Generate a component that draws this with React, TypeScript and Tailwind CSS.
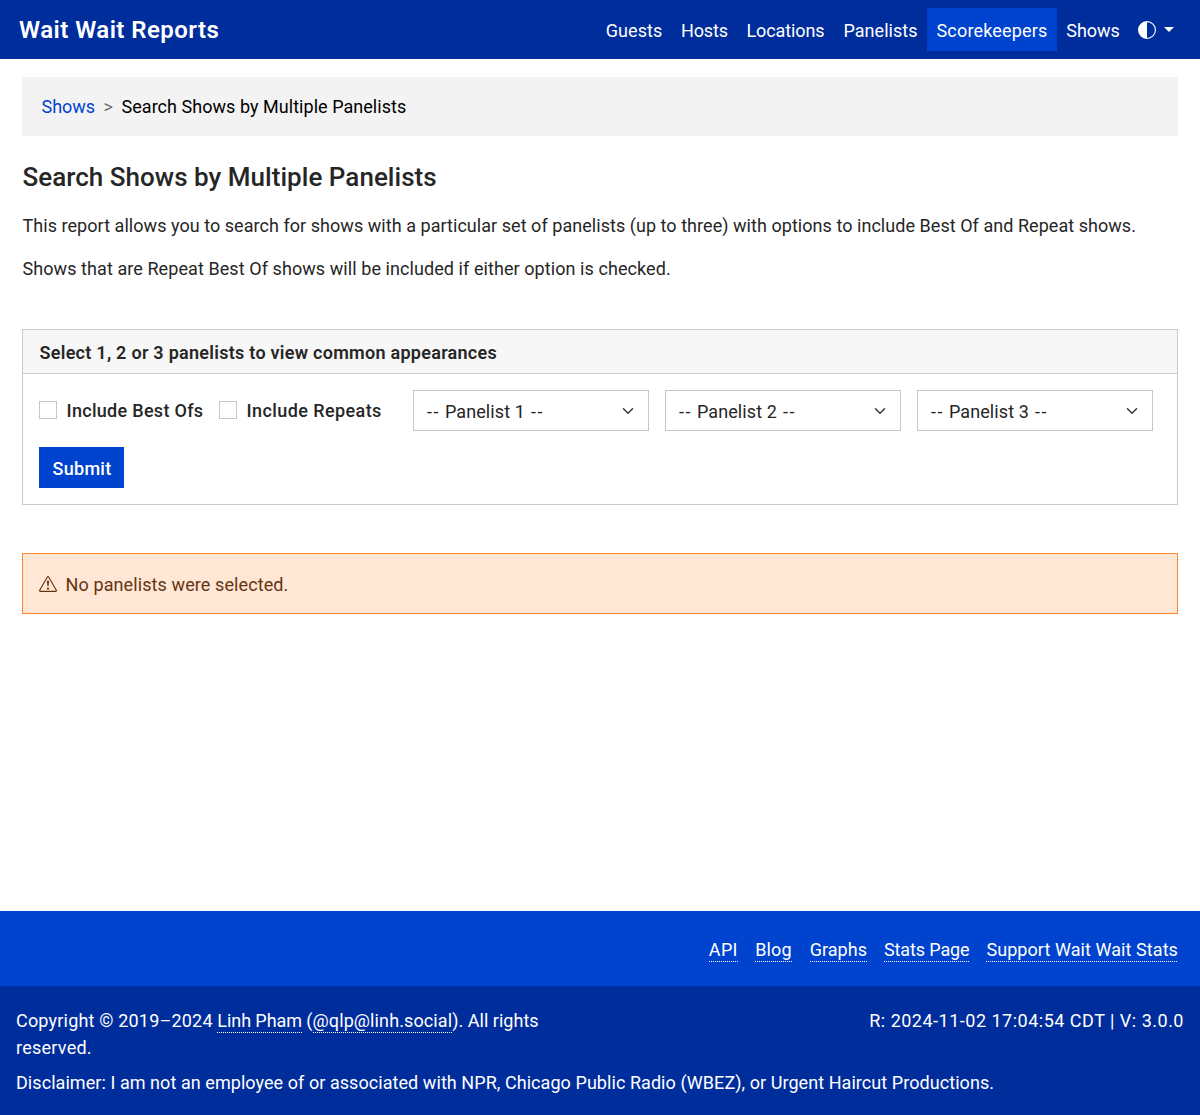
import { BsCircleHalf, BsExclamationTriangle } from 'react-icons/bs';

const navLinks = [
  { label: 'Guests', box: 'w-[76px]', text: 'tracking-[0.05px]' },
  { label: 'Hosts', box: 'w-[65px]', text: 'tracking-[-0.1px]' },
  { label: 'Locations', box: 'w-[97px]', text: 'tracking-[-0.1px]' },
  { label: 'Panelists', box: 'w-[93px]', text: 'tracking-[0.03px]' },
  { label: 'Scorekeepers', box: 'w-[130px] bg-[#0043ce]', text: 'tracking-[0.17px]' },
  { label: 'Shows', box: 'w-[72px]', text: 'tracking-[-0.04px]' },
];

const footerLinks = [
  { label: 'API', style: 'w-[29px] tracking-[0.34px]' },
  { label: 'Blog', style: 'w-[37px] tracking-[0.13px]' },
  { label: 'Graphs', style: 'w-[57px] tracking-[0.06px]' },
  { label: 'Stats Page', style: 'w-[85px] tracking-[-0.12px]' },
  { label: 'Support Wait Wait Stats', style: 'w-[191px] tracking-[0.07px]' },
];

function NavBar() {
  return (
    <nav className="flex h-[59px] items-start justify-between bg-[#002d9c] pt-2 pr-[26px] pl-[19px] text-white">
      <a href="#" className="text-[24px] leading-[45px] font-semibold tracking-[0.46px]">
        Wait Wait Reports
      </a>
      <div className="flex h-[43px]">
        {navLinks.map((link) => (
          <a key={link.label} href="#" className={`flex justify-center leading-[45px] whitespace-nowrap ${link.box}`}>
            <span className={link.text}>{link.label}</span>
          </a>
        ))}
        <button type="button" aria-label="Toggle theme" className="ml-[9px] flex items-center gap-2">
          <BsCircleHalf className="size-[18px]" />
          <span className="mb-px size-0 border-x-[5px] border-t-[5px] border-x-transparent border-t-white" />
        </button>
      </div>
    </nav>
  );
}

function Breadcrumb() {
  return (
    <ol className="mt-[18px] flex h-[59px] bg-[#f3f3f3] pl-[19.5px] leading-[60px]">
      <li className="tracking-[-0.04px] text-[#0043ce]">
        <a href="#">Shows</a>
      </li>
      <li className="w-[26.5px] text-center text-[#6f6f6f]">&gt;</li>
      <li className="tracking-[0.04px] text-black">Search Shows by Multiple Panelists</li>
    </ol>
  );
}

function Checkbox({ label, text }: { label: string; text: string }) {
  return (
    <label className="flex h-[41px] items-center">
      <span className="mb-[2px] size-[18px] shrink-0 border border-[#c6c6c6] bg-white" />
      <span className={`ml-[9.5px] font-medium whitespace-nowrap ${text}`}>{label}</span>
    </label>
  );
}

function PanelistSelect({ number }: { number: number }) {
  return (
    <button
      type="button"
      className="flex h-[41px] w-[236px] items-center justify-between border border-[#c6c6c6] bg-white pr-[14px] pl-[13px] text-left"
    >
      <span className="pt-[2px] tracking-[0.1px]">
        <span className="tracking-[1.5px]">-- </span>
        <span className="-ml-px">Panelist {number}</span>
        <span className="tracking-[1.5px]"> --</span>
      </span>
      <svg viewBox="0 0 16 16" className="size-3" fill="none" stroke="#393939" strokeWidth="2" strokeLinecap="round" strokeLinejoin="round">
        <path d="m2 5 6 6 6-6" />
      </svg>
    </button>
  );
}

function SearchCard() {
  return (
    <section className="mt-[47px] h-[176px] border border-[#cacaca]">
      <h2 className="h-[44px] border-b border-[#cacaca] bg-[#f7f7f7] pl-[16.5px] leading-[45px] font-semibold tracking-[0.27px]">
        Select 1, 2 or 3 panelists to view common appearances
      </h2>
      <form className="flex flex-wrap gap-4 p-4">
        <div className="flex w-[358px] gap-4">
          <div className="w-[164px]">
            <Checkbox label="Include Best Ofs" text="tracking-[0.3px]" />
          </div>
          <Checkbox label="Include Repeats" text="tracking-[0.41px]" />
        </div>
        <PanelistSelect number={1} />
        <PanelistSelect number={2} />
        <PanelistSelect number={3} />
        <button type="button" className="h-[41px] w-[85px] bg-[#0043ce] pt-[2px] pl-px font-medium tracking-[0.28px] text-white">
          Submit
        </button>
      </form>
    </section>
  );
}

function Footer() {
  return (
    <footer className="mt-auto text-white">
      <div className="flex h-[75px] justify-end gap-[17.4px] bg-[#0043ce] pt-[26px] pr-[22.6px]">
        {footerLinks.map((link) => (
          <a
            key={link.label}
            href="#"
            className={`h-[25px] border-b border-dotted border-white leading-[26px] whitespace-nowrap ${link.style}`}
          >
            {link.label}
          </a>
        ))}
      </div>
      <div className="h-[129px] bg-[#002d9c] px-4 pt-[21px] leading-[27px]">
        <div className="flex justify-between">
          <p className="w-[560px]">
            <span className="tracking-[0.19px]">Copyright © 2019–2024 </span>
            <a href="#" className="border-b border-dotted border-white pb-px tracking-[-0.08px]">
              Linh Pham
            </a>{' '}
            (
            <a href="#" className="border-b border-dotted border-white pb-px tracking-[0.11px]">
              @qlp@linh.social
            </a>
            <span className="tracking-[0.02px]">). All rights</span>
            <br />
            <span className="tracking-[0.25px]">reserved.</span>
          </p>
          <p className="tracking-[0.5px]">R: 2024-11-02 17:04:54 CDT | V: 3.0.0</p>
        </div>
        <p className="mt-2 tracking-[0.06px]">
          Disclaimer: I am not an employee of or associated with NPR, Chicago Public Radio (WBEZ), or Urgent Haircut
          Productions.
        </p>
      </div>
    </footer>
  );
}

export default function App() {
  return (
    <div className="flex h-[1115px] flex-col bg-white font-['Roboto',sans-serif] text-[18px] text-[#262626]">
      <NavBar />
      <main className="px-[22px]">
        <Breadcrumb />
        <h1 className="mt-[25px] pl-[0.5px] text-[26px] leading-[32px] font-medium tracking-[0.03px]">
          Search Shows by Multiple Panelists
        </h1>
        <p className="mt-[19px] pl-[0.5px] leading-[27px] tracking-[0.045px] whitespace-nowrap">
          This report allows you to search for shows with a particular set of panelists (up to three) with options to
          include Best Of and Repeat shows.
        </p>
        <p className="mt-4 pl-[0.5px] leading-[27px] tracking-[0.075px]">
          Shows that are Repeat Best Of shows will be included if either option is checked.
        </p>
        <SearchCard />
        <div className="mt-[48px] flex h-[61px] items-center border border-[#ff832b] bg-[#ffe6d5] pl-[16.4px] text-[#663411]">
          <BsExclamationTriangle className="size-[18px]" />
          <span className="ml-[8.2px] pt-px tracking-[0.1px]">No panelists were selected.</span>
        </div>
      </main>
      <Footer />
    </div>
  );
}
